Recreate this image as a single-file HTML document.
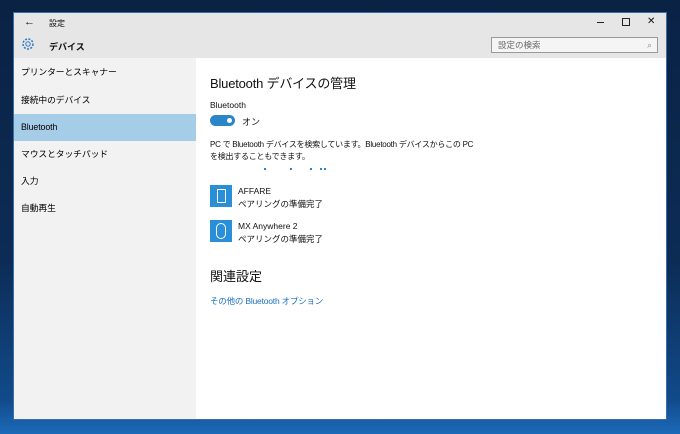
<!DOCTYPE html>
<html><head><meta charset="utf-8"><style>
body{margin:0;width:680px;height:434px;overflow:hidden;font-family:"Liberation Sans","Noto Sans CJK JP",sans-serif;
background:linear-gradient(180deg,#0a2244 0%,#0c2c55 60%,#114a8a 92%,#1c6ab8 100%);position:relative}
.win{position:absolute;left:14px;top:13px;width:652px;height:406px;background:#fff;box-shadow:0 0 0 1px #3a6ea8}
.title{position:absolute;left:0;top:0;width:652px;height:45px;background:#e6e6e6}
.side{position:absolute;left:0;top:45px;width:182px;height:361px;background:#f2f2f2}
.t{position:absolute;font-size:9px;color:#111;white-space:nowrap}
.item{position:absolute;left:0;width:182px;height:27px;line-height:27px;font-size:8.8px;padding-left:7px;box-sizing:border-box;letter-spacing:-0.1px}
.sel{background:#a6cde8}
.search{position:absolute;left:477px;top:24px;width:167px;height:16px;border:1px solid #999;background:#f5f5f5;box-sizing:border-box;font-size:8.5px;color:#666;line-height:14px;padding-left:6px}
.dev{position:absolute;left:196px;width:22px;height:22px;background:#2a8fd9}
</style></head><body>
<div class="win">
<div class="title"></div>
<div class="t" style="left:10px;top:3px;font-size:11px">←</div>
<div class="t" style="left:35px;top:5px;font-size:8px">設定</div>
<div style="position:absolute;left:583px;top:9px;width:7px;height:1px;background:#222"></div>
<div style="position:absolute;left:608px;top:5px;width:6px;height:6px;border:1px solid #222"></div>
<div class="t" style="left:633px;top:3px;font-size:10px">✕</div>
<svg style="position:absolute;left:7px;top:24px" width="14" height="14" viewBox="0 0 14 14"><circle cx="7" cy="7" r="5" fill="none" stroke="#2a78c8" stroke-width="1.5" stroke-dasharray="2 1.4"/><circle cx="7" cy="7" r="2.2" fill="none" stroke="#2a78c8"/></svg>
<div class="t" style="left:35px;top:27px;font-weight:bold">デバイス</div>
<div class="search">設定の検索<span style="position:absolute;right:5px;color:#888">⌕</span></div>
<div class="side">
<div class="item" style="top:1px">プリンターとスキャナー</div>
<div class="item" style="top:29px">接続中のデバイス</div>
<div class="item sel" style="top:56px">Bluetooth</div>
<div class="item" style="top:83px">マウスとタッチパッド</div>
<div class="item" style="top:110px">入力</div>
<div class="item" style="top:137px">自動再生</div>
</div>
<div class="t" style="left:196px;top:60px;font-size:13px;color:#111;letter-spacing:-0.2px">Bluetooth デバイスの管理</div>
<div class="t" style="left:196px;top:87px;font-size:8.5px">Bluetooth</div>
<div style="position:absolute;left:196px;top:102px;width:25px;height:11px;border-radius:6px;background:#2a86c8"><div style="position:absolute;right:3px;top:3px;width:5px;height:5px;border-radius:50%;background:#fff"></div></div>
<div class="t" style="left:228px;top:102px">オン</div>
<div class="t" style="left:196px;top:126px;line-height:12px;font-size:8px;letter-spacing:-0.25px">PC で Bluetooth デバイスを検索しています。Bluetooth デバイスからこの PC<br>を検出することもできます。</div>
<div style="position:absolute;left:250px;top:155px;width:2px;height:2px;background:#2a86c8;box-shadow:26px 0 #2a86c8,46px 0 #2a86c8,56px 0 #2a86c8,60px 0 #2a86c8"></div>
<div class="dev" style="top:172px"><div style="position:absolute;left:7px;top:4px;width:7px;height:12px;border:1px solid #fff;border-radius:1px"></div></div>
<div class="t" style="left:224px;top:173px;font-size:8.5px">AFFARE</div>
<div class="t" style="left:224px;top:185px;font-size:8.5px">ペアリングの準備完了</div>
<div class="dev" style="top:207px"><div style="position:absolute;left:6px;top:3px;width:8px;height:14px;border:1px solid #fff;border-radius:5px"></div></div>
<div class="t" style="left:224px;top:208px;font-size:8.5px">MX Anywhere 2</div>
<div class="t" style="left:224px;top:220px;font-size:8.5px">ペアリングの準備完了</div>
<div class="t" style="left:196px;top:253px;font-size:13px">関連設定</div>
<div class="t" style="left:196px;top:282px;color:#1a6fc0;font-size:8.5px;letter-spacing:-0.2px">その他の Bluetooth オプション</div>
</div>
</body></html>
